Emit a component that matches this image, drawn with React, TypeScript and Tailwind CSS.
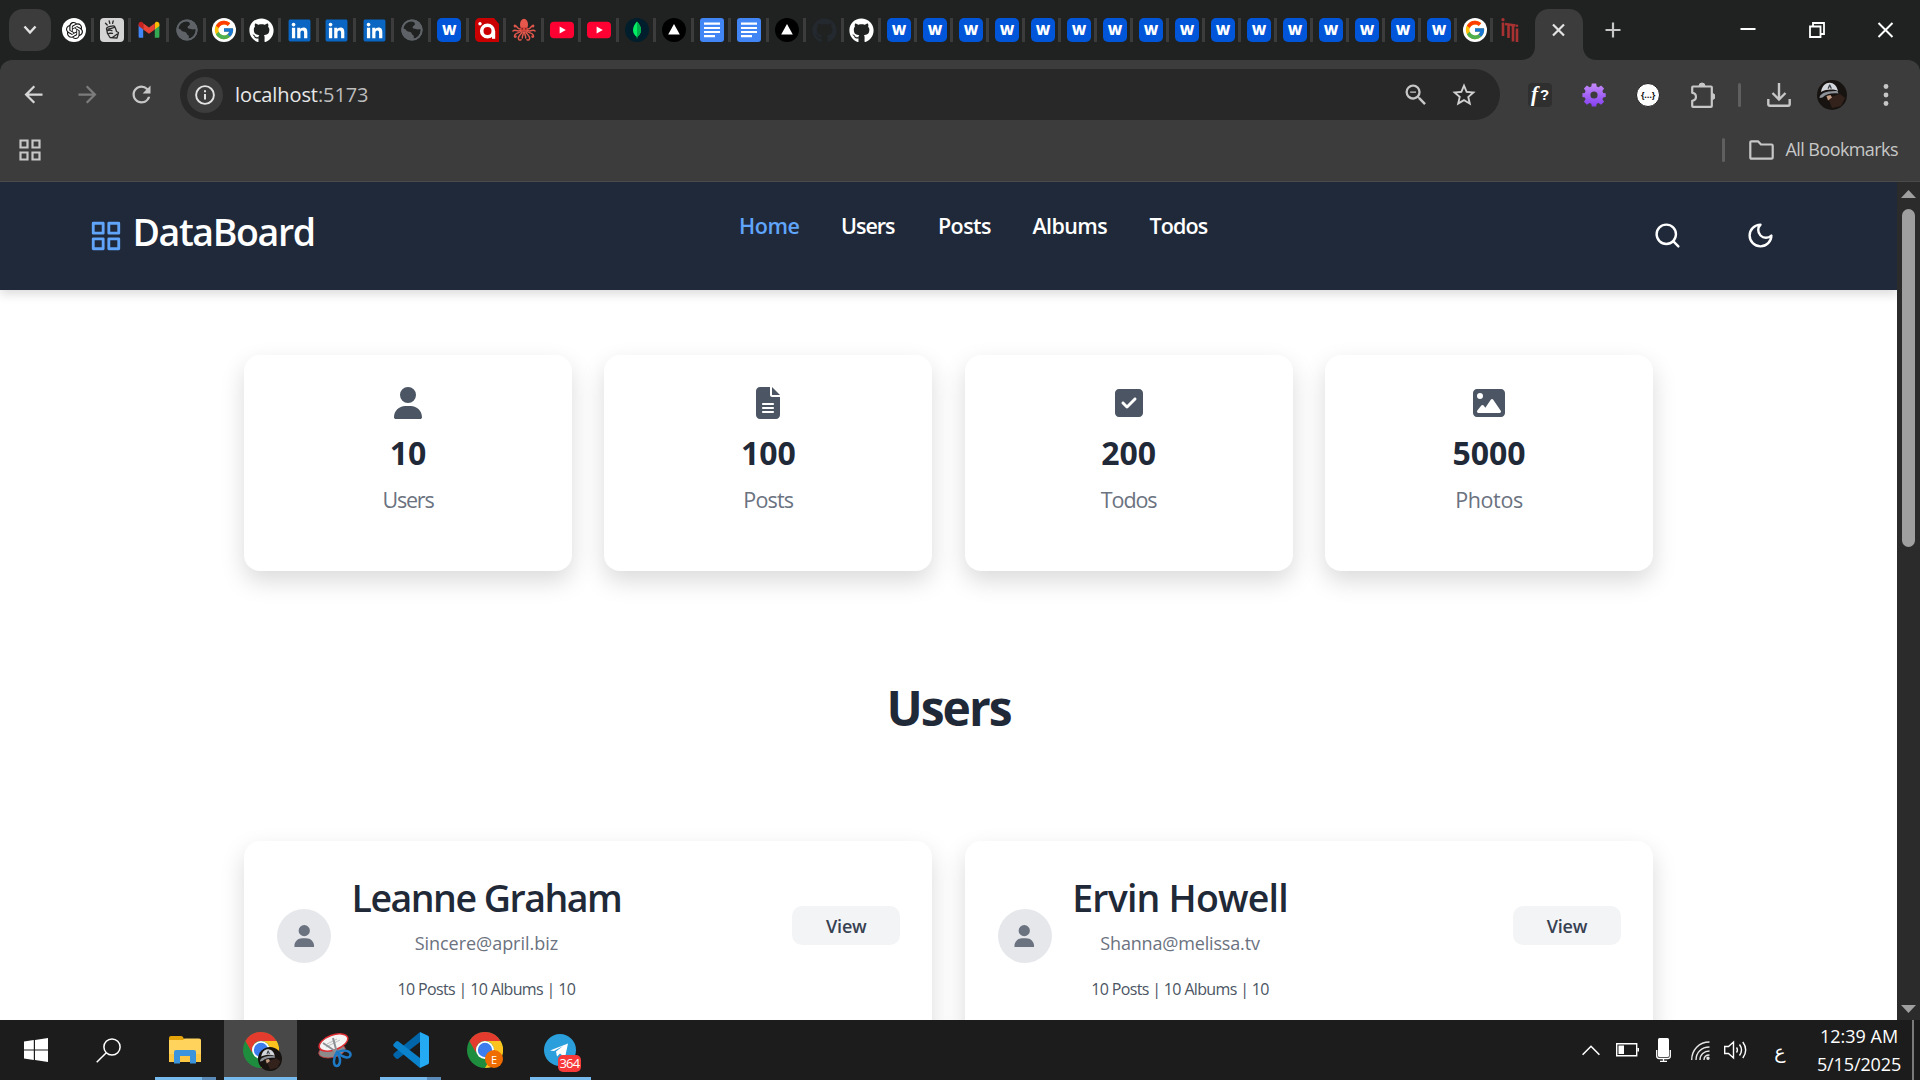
import React from "react";
import { FaUser, FaFileLines, FaSquareCheck, FaImage, FaGithub, FaLinkedin } from "react-icons/fa6";
import { FcGoogle } from "react-icons/fc";
import { SiOpenai } from "react-icons/si";
import { MdArrowBack, MdArrowForward, MdRefresh, MdZoomOut, MdStarBorder } from "react-icons/md";

/* ---------- favicons ---------- */

const ChatGpt = () => (
  <span className="flex size-6 items-center justify-center rounded-full bg-white">
    <SiOpenai size={17} color="#111" />
  </span>
);

const Hand = () => (
  <svg viewBox="0 0 24 24" className="size-6">
    <rect width="24" height="24" rx="4" fill="#d4d4d4" />
    <g fill="none" stroke="#2b2b2b" strokeWidth="1.300" strokeLinecap="round" strokeLinejoin="round">
      <path d="M5.500 5.200 7.200 7M9.200 3l.6 2.400M13.200 3l-.6 2.400" />
      <path d="M6.500 10.500c0-1.500 7-3.500 8-2.200 1 1.200-5 2.600-6.500 2.900M7 13c1.500-.8 4-1 5-.3M8 15.800c1.500-.8 3-.6 4.500-.4M14.500 8.300c1 2 1.500 3 2 5.200l2 1-1.500 5.500-7-.5-2.500-4-1-5M12 19.800l5-3.600" />
    </g>
  </svg>
);

const Gmail = () => (
  <svg viewBox="0 0 24 24" className="size-6">
    <path d="M1.600 6.500v12.300c0 .5.4 1 1 1h3.600V10z" fill="#4285f4" />
    <path d="M22.400 6.500v12.300c0 .5-.4 1-1 1h-3.600V10z" fill="#34a853" />
    <path d="M17.800 5.300v6.200l4.600-3.400V6c0-2-2.200-3-3.700-1.900z" fill="#fbbc04" />
    <path d="M6.200 11.500V5.300L12 9.600l5.800-4.300v6.200L12 15.800z" fill="#ea4335" />
    <path d="M1.600 6v2.100l4.600 3.400V5.300l-.9-1.200C3.800 3 1.600 4 1.600 6z" fill="#c5221f" />
  </svg>
);

const Globe = () => (
  <svg viewBox="0 0 24 24" className="size-6">
    <circle cx="12" cy="12" r="10.600" fill="#5f6368" />
    <path d="M8 3.600c4-1 7 .4 7 2.400 0 1.800-2.400 1.600-2.400 3.400 0 1.400 1.800.8 3.400 1.600 1.400.7 2.600.2 4.800.4-.2 5-3.200 8.400-7.200 9.200.3-2 .6-3-.8-3.600-1.200-.5-.8-2.200-2.200-2.800-1.400-.6-3.800-.3-4.600-2.200-.5-1.200-2-1.400-2.600-1.600C3.600 7.200 5.600 4.700 8 3.600z" fill="#1f2221" />
    <circle cx="12" cy="12" r="9.700" fill="none" stroke="#5f6368" strokeWidth="1.800" />
  </svg>
);

const Google = () => (
  <span className="flex size-6 items-center justify-center rounded-full bg-white">
    <FcGoogle size={22} />
  </span>
);

const Wuzzuf = () => (
  <span className="flex size-6 items-center justify-center rounded-[5px] bg-[#0055d9] text-[14px] font-extrabold leading-none text-white">
    W
  </span>
);

const RedA = () => (
  <svg viewBox="0 0 24 24" className="size-6">
    <path d="M5 0h14l5 6v18H5c-3 0-5-2-5-5V5c0-3 2-5 5-5z" fill="#cb0000" />
    <circle cx="12.500" cy="13" r="5.800" fill="none" stroke="#fff" strokeWidth="3.600" />
    <path d="M17 13h3.200v7.800H17z" fill="#fff" />
    <circle cx="5" cy="5.800" r="1.700" fill="#fff" />
  </svg>
);

const Octopus = () => (
  <svg viewBox="0 0 24 24" className="size-6">
    <ellipse cx="12" cy="6.500" rx="4" ry="5.800" fill="#e8574c" />
    <path d="M9 9h6l1 4.500H8z" fill="#d8453c" />
    <g fill="none" stroke="#e2574c" strokeWidth="1.500" strokeLinecap="round">
      <path d="M8.500 11C6 11.500 5.500 9 3.500 7.500 2.500 6.500 1.800 8 3 8.800M15.500 11c2.500.5 3-2 5-3.500 1-1 1.700.5.5 1.300" />
      <path d="M8.500 12.500C5 14 3 11 1 13M15.500 12.500c3.500 1.500 5.500-1.500 7.500.5" />
      <path d="M9 13.500c-3 2-6 1-6.500 4.500-.2 1.500 1.500 1.500 1.500.2M15 13.500c3 2 6 1 6.500 4.500.2 1.500-1.500 1.500-1.500.2" />
      <path d="M10 14c-1 3-4.500 3.500-3.500 7 .4 1.200 1.700 1.400 2.500.7M14 14c1 3 4.500 3.500 3.500 7-.4 1.200-1.700 1.400-2.500.7" />
      <path d="M11.300 14c.3 3-1.300 4-1 6M12.700 14c-.3 3 1.300 4 1 6" />
    </g>
    <path d="M10.200 10.200v1.200M13.800 10.200v1.200" stroke="#4a1410" strokeWidth="1.200" />
  </svg>
);

const YouTube = () => (
  <svg viewBox="0 0 24 24" className="size-6">
    <rect y="3.700" width="24" height="16.600" rx="4" fill="#ff0033" />
    <path d="M9.600 8.400v7.200l6.200-3.600z" fill="#fff" />
  </svg>
);

const Mongo = () => (
  <svg viewBox="0 0 24 24" className="size-6">
    <circle cx="12" cy="12" r="12" fill="#001e2b" />
    <path d="M12 3.500c2 2.300 4 4.800 4 8.500 0 3.300-1.600 5.300-3.600 6.800L12 21l-.4-2.200C9.600 17.300 8 15.300 8 12c0-3.700 2-6.200 4-8.500z" fill="#00ed64" />
    <path d="M12 3.500v17.500l.4-2.200c2-1.500 3.600-3.500 3.600-6.800 0-3.700-2-6.200-4-8.500z" fill="#00b04c" />
  </svg>
);

const Vercel = () => (
  <svg viewBox="0 0 24 24" className="size-6">
    <circle cx="12" cy="12" r="12" fill="#000" />
    <path d="M12 6l5.800 10.600H6.200z" fill="#fff" />
  </svg>
);

const Docs = () => (
  <svg viewBox="0 0 24 24" className="size-6">
    <rect width="24" height="24" rx="3" fill="#4285f4" />
    <path d="M4 5.700h16M4 10h16M4 14h16M4 18.200h11" stroke="#fff" strokeWidth="2.200" />
  </svg>
);

const Iti = () => (
  <svg viewBox="0 0 24 24" className="size-6">
    <g fill="none" stroke="#a83232" strokeWidth="2.600">
      <path d="M5 4.500V18M7 6l10.500 1.500M10.500 6v14M15 7v16.500M19 10.500V24" />
    </g>
    <circle cx="5" cy="1.700" r="1.600" fill="#a83232" />
    <circle cx="19" cy="7.800" r="1.300" fill="#a83232" />
  </svg>
);

const Linked = () => <FaLinkedin size={25} color="#0a66c2" className="rounded bg-[linear-gradient(#fff,#fff)] bg-[length:18px_18px] bg-center bg-no-repeat" />;
const GitLight = () => <FaGithub size={25} color="#fff" />;
const GitDark = () => <FaGithub size={25} color="#24292f" />;

const mixedTabs = [ChatGpt, Hand, Gmail, Globe, Google, GitLight, Linked, Linked, Linked, Globe, Wuzzuf, RedA, Octopus, YouTube, YouTube, Mongo, Vercel, Docs, Docs, Vercel, GitDark, GitLight];
const wTabs = Array.from({ length: 16 }, () => Wuzzuf);

function TabStrip() {
  return (
    <div className="flex h-[60px] items-center bg-[#1f2221]">
      <div className="ml-[9px] flex size-[42px] items-center justify-center rounded-[14px] bg-[#3c3c3c]">
        <svg width="14" height="10" viewBox="0 0 14 10" fill="none" stroke="#e3e3e3" strokeWidth="2.400">
          <path d="M1.500 1.500 7 7.500l5.500-6" />
        </svg>
      </div>
      <div className="ml-[5px] flex items-center">
        {mixedTabs.map((Icon, i) => (
          <div key={i} className="flex w-[37.5px] items-center">
            <div className="flex w-[34.5px] justify-center pl-[2px]"><Icon /></div>
            <div className="h-6 w-[3px] bg-[#3c3c3c]" />
          </div>
        ))}
        {[...wTabs, Google].map((Icon, i) => (
          <div key={i} className="flex w-9 items-center">
            <div className="flex w-[33px] justify-center pl-[3px]"><Icon /></div>
            <div className="h-6 w-[3px] bg-[#3c3c3c]" />
          </div>
        ))}
        <div className="flex w-[34px] justify-center"><Iti /></div>
      </div>
      <svg width="80" height="60" viewBox="0 0 80 60" className="-ml-[6px]">
        <path d="M0 60c9 0 14-6 14-14V23c0-8 6-14 14-14h20c8 0 14 6 14 14v23c0 8 5 14 14 14z" fill="#3c3c3c" />
        <path d="M32 24.500l11 11M43 24.500l-11 11" stroke="#e3e3e3" strokeWidth="2.200" />
      </svg>
      <svg width="16" height="16" viewBox="0 0 16 16" className="ml-[4px]">
        <path d="M8 .5v15M.5 8h15" stroke="#c7c7c7" strokeWidth="2.200" />
      </svg>
      <svg width="154" height="16" viewBox="0 0 154 16" className="ml-auto mr-[26px]" fill="none" stroke="#fff" strokeWidth="2">
        <path d="M.5 7h15" />
        <path d="M70 4.500h10.500v10.500H70zM73 4V1h11v11h-3" strokeWidth="1.800" />
        <path d="M138.500 1l14 14M152.500 1l-14 14" />
      </svg>
    </div>
  );
}

function Photo({ className }: { className: string }) {
  return (
    <svg viewBox="0 0 30 30" className={className}>
      <circle cx="15" cy="15" r="15" fill="#171310" />
      <path d="M11 18l12-4 5 4-4 8-9 2z" fill="#33221c" />
      <path d="M4 12C5 5 10 2 14 3c4 .5 6 4 7 8-5-2-11-2-17 1z" fill="#d3d6da" />
      <path d="M2.500 18c0-4 6-7.500 18-7l1 2.500c-7-.5-12 0-16 4z" fill="#8d9298" />
      <path d="M10.500 8.500l1.700-4h1l1.800 4-1.400.2-.9-2.200-.8 2.200z" fill="#3d4148" />
      <path d="M9.500 16l4-1 1.500 2.500-4 3z" fill="#c19a80" />
    </svg>
  );
}

function Toolbar() {
  return (
    <div className="bg-[#1f2221]">
      <div className="h-[121px] rounded-t-[12px] bg-[#3c3c3c]">
        <div className="flex h-[69px] items-center">
          <MdArrowBack size={27} color="#d6d6d6" className="ml-[19.5px]" />
          <MdArrowForward size={27} color="#7c7c7c" className="ml-[27px]" />
          <MdRefresh size={27} color="#c7c7c7" className="ml-[27px]" />
          <div className="ml-[25.5px] flex h-[51px] w-[1320px] items-center rounded-full bg-[#282828]">
            <div className="ml-[7px] flex size-9 items-center justify-center rounded-full bg-[#3c3c3c]">
              <svg width="20" height="20" viewBox="0 0 20 20">
                <circle cx="10" cy="10" r="8.900" fill="none" stroke="#e3e3e3" strokeWidth="1.900" />
                <path d="M10 9v5.500M10 5.300v2" stroke="#e3e3e3" strokeWidth="2" />
              </svg>
            </div>
            <span className="ml-[12px] text-[20px] leading-[28px] tracking-[-0.1px] text-[#e8e8e8]">
              localhost<span className="text-[#bdbdbd]">:5173</span>
            </span>
            <MdZoomOut size={28} color="#c7c7c7" className="ml-auto" />
            <MdStarBorder size={28} color="#d0d0d0" className="ml-[20px] mr-[22px]" />
          </div>
          <div className="ml-[28px] flex size-6 items-center justify-center rounded bg-[#2f2f2f] font-['Liberation_Serif'] text-[21px] font-bold italic leading-none text-white">
            <span>f</span><span className="ml-[2px] font-['Liberation_Sans'] text-[15px] not-italic">?</span>
          </div>
          <svg viewBox="0 0 24 24" className="ml-[30px] size-6">
            <defs>
              <linearGradient id="gear" x1="0" y1="0" x2="0" y2="1">
                <stop offset="0" stopColor="#c58af9" />
                <stop offset="1" stopColor="#8440f1" />
              </linearGradient>
            </defs>
            <path fill="url(#gear)" fillRule="evenodd" d="M9.800.5h4.400l.5 3 1.800.8 2.600-1.800 3 3-1.700 2.500.8 1.900 2.500.3v3.700l-2.500.5-.8 1.800 1.700 2.500-3 3-2.600-1.800-1.800.8-.5 2.900H9.800l-.5-2.900-1.800-.8-2.600 1.800-3-3 1.700-2.500-.8-1.800L.4 13.900v-3.700l2.400-.3.8-1.900L1.900 5.500l3-3 2.600 1.800 1.800-.8zM12 8.400a3.600 3.600 0 1 0 0 7.200 3.600 3.600 0 0 0 0-7.200z" />
          </svg>
          <div className="ml-[30px] flex size-6 items-center justify-center rounded-full border border-[#1f1f1f] bg-white text-[9px] font-bold leading-none tracking-[-0.3px] text-[#111]">
            {"{…}"}
          </div>
          <svg viewBox="0 0 26 26" className="ml-[29px] size-[26px]" fill="none" stroke="#c7c7c7" strokeWidth="2.200" strokeLinejoin="round">
            <path d="M4 4.500h18q.8 0 .8.800V24q0 .8-.8.800H4q-.8 0-.8-.8v-5.200c5-.5 5-7.500 0-8V5.300q0-.8.8-.8z" />
            <path d="M10 4a3 3 0 0 1 6 0zM23 11.500a3 3 0 0 1 0 6z" fill="#c7c7c7" strokeWidth="1" />
          </svg>
          <div className="ml-[23px] h-6 w-[3px] rounded bg-[#5f5f5f]" />
          <svg viewBox="0 0 24 24" className="ml-[26px] size-6" fill="none" stroke="#c7c7c7" strokeWidth="2.400">
            <path d="M12 0v16M5.500 10l6.500 6.500 6.500-6.500M1.300 16v5q0 1.700 1.700 1.700h18q1.700 0 1.700-1.700v-5" />
          </svg>
          <Photo className="ml-[26px] size-[30px]" />
          <svg width="6" height="22" viewBox="0 0 6 22" className="ml-[36px]" fill="#c7c7c7">
            <circle cx="3" cy="2.500" r="2.400" />
            <circle cx="3" cy="11" r="2.400" />
            <circle cx="3" cy="19.500" r="2.400" />
          </svg>
        </div>
        <div className="flex h-[42px] items-center">
          <svg width="22" height="22" viewBox="0 0 22 22" className="ml-[19px]" fill="none" stroke="#c7c7c7" strokeWidth="2.200">
            <path d="M1.500 1.500h7v7h-7zM13.500 1.500h7v7h-7zM1.500 13.500h7v7h-7zM13.500 13.500h7v7h-7z" />
          </svg>
          <div className="ml-auto h-6 w-[3px] rounded bg-[#5f5f5f]" />
          <svg width="25" height="20" viewBox="0 0 25 20" className="ml-[24px]" fill="none" stroke="#c7c7c7" strokeWidth="2.200" strokeLinejoin="round">
            <path d="M2.500 1.300h6.500l3 3.200h10.500q1.200 0 1.200 1.200v11.800q0 1.200-1.200 1.200h-20q-1.200 0-1.200-1.200v-15q0-1.200 1.200-1.200z" />
          </svg>
          <span className="mb-[2px] ml-[11px] mr-[22px] text-[18px] leading-[26px] tracking-[-0.57px] text-[#c7c7c7]">All Bookmarks</span>
        </div>
      </div>
      <div className="h-px bg-[#4a4a4a]" />
    </div>
  );
}

/* ---------- page ---------- */

const links = [
  { label: "Home", box: "w-[102px] tracking-[-0.4px] text-[#60a5fa]" },
  { label: "Users", box: "w-[97px] tracking-[-1px]" },
  { label: "Posts", box: "w-[94.5px] tracking-[-0.6px]" },
  { label: "Albums", box: "w-[117px] tracking-[-0.6px]" },
  { label: "Todos", box: "w-[60px] tracking-[-0.9px]" },
];

function Navbar() {
  return (
    <nav className="relative z-10 flex h-[108px] shrink-0 items-start bg-[#1f293a] text-white shadow-[0_4px_10px_rgba(0,0,0,0.15)]">
      <div className="flex w-[739px] pl-[89px] pt-[26px]">
        <svg viewBox="0 0 24 24" className="mt-[11px] size-[34px]" fill="none" stroke="#60a5fa" strokeWidth="2" strokeLinejoin="round">
          <path d="M3 3h7v7H3zM14 3h7v7h-7zM14 14h7v7h-7zM3 14h7v7H3z" />
        </svg>
        <span className="ml-[9.5px] text-[37.5px] font-semibold leading-[48px] tracking-[-1.4px]">DataBoard</span>
      </div>
      <div className="flex pt-[29px] text-[21.5px] font-semibold leading-[30px]">
        {links.map((l) => (
          <a key={l.label} className={l.box}>{l.label}</a>
        ))}
      </div>
      <div className="ml-auto flex gap-[64px] pr-[122px] pt-[39px]">
        <svg viewBox="0 0 24 24" className="size-[29px]" fill="none" stroke="#fff" strokeWidth="2" strokeLinecap="round">
          <circle cx="11" cy="11" r="8" />
          <path d="m21 21-4.300-4.300" />
        </svg>
        <svg viewBox="0 0 24 24" className="size-[29px]" fill="none" stroke="#fff" strokeWidth="2" strokeLinecap="round" strokeLinejoin="round">
          <path d="M12 3a6 6 0 0 0 9 9 9 9 0 1 1-9-9Z" />
        </svg>
      </div>
    </nav>
  );
}

const stats = [
  { Icon: FaUser, value: "10", label: "Users", fit: "tracking-[-1.2px]" },
  { Icon: FaFileLines, value: "100", label: "Posts", fit: "tracking-[-0.8px]" },
  { Icon: FaSquareCheck, value: "200", label: "Todos", fit: "tracking-[-1.1px]" },
  { Icon: FaImage, value: "5000", label: "Photos", fit: "tracking-[-0.4px]" },
];

const users = [
  { name: "Leanne Graham", email: "Sincere@april.biz", nameFit: "tracking-[-1.5px]", emailFit: "tracking-[-0.03px]" },
  { name: "Ervin Howell", email: "Shanna@melissa.tv", nameFit: "tracking-[-0.8px]", emailFit: "tracking-[-0.17px]" },
];

function Page() {
  return (
    <div className="flex flex-1 flex-col overflow-hidden bg-white">
      <Navbar />
      <main className="mx-[244px] pt-[65px]">
        <div className="grid grid-cols-4 gap-[32.4px]">
          {stats.map(({ Icon, value, label, fit }) => (
            <div key={label} className="flex h-[216px] flex-col items-center rounded-[16px] bg-white pt-8 shadow-[0_10px_24px_rgba(0,0,0,0.15)]">
              <Icon size={32} color="#4b5563" />
              <div className="mt-[14px] text-[32px] font-bold leading-[40px] text-[#1f2937]">{value}</div>
              <div className={`mt-[12px] text-[21.5px] leading-[30px] text-[#6b7280] ${fit}`}>{label}</div>
            </div>
          ))}
        </div>
        <h2 className="mt-[107px] text-center text-[48px] font-bold leading-[60px] tracking-[-2px] text-[#1f2937]">Users</h2>
        <div className="mt-[103px] grid grid-cols-2 gap-[32.4px]">
          {users.map((u) => (
            <div key={u.name} className="flex h-[240px] items-start rounded-[16px] bg-white px-8 pt-8 shadow-[0_10px_24px_rgba(0,0,0,0.15)]">
              <div className="ml-[1px] mt-[36px] flex size-[54px] items-center justify-center rounded-full bg-[#e5e7eb]">
                <FaUser size={22.5} color="#6b7280" />
              </div>
              <div className="ml-[20.5px] flex flex-col items-center">
                <div className={`text-[37.5px] font-semibold leading-[49px] text-[#1f2937] ${u.nameFit}`}>{u.name}</div>
                <div className={`mt-[7px] text-[18px] leading-[28px] text-[#6b7280] ${u.emailFit}`}>{u.email}</div>
                <div className="mt-[20px] text-[16px] leading-[24px] tracking-[-0.65px] text-[#4b5563]">10 Posts | 10 Albums | 10</div>
              </div>
              <div className="ml-auto mt-[33px] flex h-[39px] w-[108px] items-center justify-center rounded-[10px] bg-[#f3f4f6] pt-[2px] text-[18px] font-semibold tracking-[-0.2px] text-[#374151]">
                View
              </div>
            </div>
          ))}
        </div>
      </main>
    </div>
  );
}

function Scrollbar() {
  return (
    <div className="flex w-[23px] flex-col items-center bg-[#2b2b2b]">
      <svg width="15" height="8" viewBox="0 0 15 8" className="mt-[8px]"><path d="M7.500 0 15 8H0z" fill="#9f9f9f" /></svg>
      <div className="mt-[11px] h-[338px] w-[13px] rounded-full bg-[#9f9f9f]" />
      <svg width="15" height="8" viewBox="0 0 15 8" className="mb-[7px] mt-auto"><path d="M0 0h15L7.500 8z" fill="#9f9f9f" /></svg>
    </div>
  );
}

/* ---------- taskbar ---------- */

function ChromeIcon() {
  return (
    <svg viewBox="0 0 36 36" className="size-9">
      <circle cx="18" cy="18" r="18" fill="#1e8e3e" />
      <path d="M33.600 9a18 18 0 0 1-15.600 27l7.800-13.500A9 9 0 0 0 18 9z" fill="#fcc31e" />
      <path d="M2.400 9A18 18 0 0 1 33.600 9H18a9 9 0 0 0-8.600 6.500l-.4 4.900z" fill="#e33b2e" />
      <circle cx="18" cy="18" r="9" fill="#fff" />
      <circle cx="18" cy="18" r="7.200" fill="#3b7ded" />
    </svg>
  );
}

function Taskbar() {
  return (
    <div className="flex h-[60px] bg-[#1c1c1c] text-white">
      <div className="flex w-[72px] items-center justify-center">
        <svg width="24" height="24" viewBox="0 0 24 24" fill="#fff">
          <path d="M0 3.400l9.800-1.300v9.300H0zM11 1.900L24 0v11.400H11zM0 12.600h9.800v9.300L0 20.600zM11 12.600h13V24l-13-1.900z" />
        </svg>
      </div>
      <div className="flex w-[72px] items-center justify-center">
        <svg width="25" height="25" viewBox="0 0 25 25" fill="none" stroke="#fff" strokeWidth="1.500">
          <circle cx="16" cy="9" r="8.100" />
          <path d="M10.300 14.700.7 24.300" />
        </svg>
      </div>
      <div className="flex w-[80px] flex-col items-center pl-[2px]">
        <svg width="32" height="28" viewBox="0 0 32 28" className="mt-[16px]">
          <path d="M0 2q0-2 2-2h10q2 0 2.500 2l.5 1h15q2 0 2 2v5H0z" fill="#e5a50a" />
          <path d="M0 4h14l1.500-1.500H30q2 0 2 2V26H0z" fill="#ffd35c" />
          <path d="M0 18h32v6q0 2-2 2H2q-2 0-2-2z" fill="#fcc743" />
          <path d="M5 16q0-2 2-2h18q2 0 2 2v11.500h-6V20H11v7.500H5z" fill="#3c94dc" />
        </svg>
        <div className="mt-auto flex h-[3px] w-[61px] bg-[#5a8ab8]"><div className="w-[47px] bg-[#76b9ed]" /></div>
      </div>
      <div className="flex w-[73px] flex-col items-center bg-[#484848]">
        <div className="relative mt-[12px]">
          <ChromeIcon />
          <div className="absolute left-[15px] top-[15px]"><Photo className="size-6" /></div>
        </div>
        <div className="mt-auto h-[3px] w-full bg-[#76b9ed]" />
      </div>
      <div className="flex w-[76px] flex-col items-center">
        <svg width="34" height="35" viewBox="0 0 34 35" className="mt-[13px]">
          <ellipse cx="14" cy="18" rx="13.500" ry="6.500" fill="#8b8b8b" stroke="#c0393b" strokeWidth=".8" transform="rotate(-12 14 18)" />
          <ellipse cx="15.500" cy="9.500" rx="15" ry="7.500" fill="#f4f4f4" stroke="#dd2e34" strokeWidth="1.500" transform="rotate(-20 15.500 9.500)" />
          <path d="M8 14l14-7M9 11l10-5" stroke="#bdbdbd" strokeWidth="1" />
          <path d="M15 5l4 15M5 10l15 10" stroke="#8d9196" strokeWidth="2" />
          <g fill="none" stroke="#1e7ac4" strokeWidth="2.500">
            <path d="M19 19c-4 6-4 14-.5 14s5.500-6 .5-14z" />
            <path d="M20 19c6-3 13-1 12.500 3S24 25 20 19z" />
          </g>
        </svg>
      </div>
      <div className="flex w-[75px] flex-col items-center">
        <svg width="36" height="36" viewBox="0 0 36 36" className="mt-[12px]">
          <path d="M27 0v10L5.500 26.500q-1.500 1-3-.5L.7 24q-1-1.500.4-2.800z" fill="#0065a9" />
          <path d="M27 36V26L5.500 9.500q-1.500-1-3 .5L.7 12q-1 1.500.4 2.800z" fill="#0a83cc" />
          <path d="M27 0l8 3.800q1 .5 1 1.700v25q0 1.200-1 1.700L27 36z" fill="#24aaf2" />
        </svg>
        <div className="mt-auto flex h-[3px] w-[61px] bg-[#5a8ab8]"><div className="w-[47px] bg-[#76b9ed]" /></div>
      </div>
      <div className="flex w-[74px] flex-col items-center">
        <div className="relative mt-[12px]">
          <ChromeIcon />
          <div className="absolute left-[18px] top-[18px] flex size-[18px] items-center justify-center rounded-full bg-[#ef6c00] text-[11px] leading-none">E</div>
        </div>
      </div>
      <div className="flex w-[76px] flex-col items-center">
        <div className="relative mt-[14px]">
          <svg width="32" height="32" viewBox="0 0 32 32">
            <circle cx="16" cy="16" r="16" fill="#2a9fdb" />
            <path d="M6 16.500L24 9.500l-3 14-5-4-3 3-1-5 7-5.500-9 5z" fill="#fff" />
          </svg>
          <div className="absolute left-[14px] top-[21px] flex h-[17px] w-[23px] items-center justify-center rounded-[5px] bg-[#f7393a] text-[13px] leading-none tracking-[-0.7px]">364</div>
        </div>
        <div className="mt-auto h-[3px] w-[61px] bg-[#76b9ed]" />
      </div>

      <div className="ml-auto flex items-center">
        <div className="flex w-9 justify-center">
          <svg width="18" height="11" viewBox="0 0 18 11" fill="none" stroke="#fff" strokeWidth="1.600"><path d="M.6 9.800 9 1.300l8.400 8.500" /></svg>
        </div>
        <div className="flex w-[37px] justify-center">
          <svg width="23" height="14" viewBox="0 0 23 14"><path d="M.7.700h20v12H.7z" fill="none" stroke="#fff" strokeWidth="1.400" /><path d="M2.500 2.500H8v8.500H2.500zM21.400 5H23v3.500h-1.600z" fill="#fff" /></svg>
        </div>
        <div className="flex w-[34px] justify-center">
          <svg width="15" height="24" viewBox="0 0 15 24"><rect x="2" width="11" height="19" rx="1.500" fill="#fff" /><path d="M.7 12v6q0 2.500 2.500 2.500h8.600q2.500 0 2.500-2.500v-6M7.500 20.500V23M4 23.300h7" fill="none" stroke="#fff" strokeWidth="1.300" /></svg>
        </div>
        <div className="flex w-10 justify-center">
          <svg width="19" height="19" viewBox="0 0 19 19" fill="none" stroke="#e6e6e6" strokeWidth="1.400">
            <path d="M.7 19C.7 9 8 1 18.500 1M5 19c0-7.500 5.500-13 13.500-13M9 19c0-5.500 4-9 9.500-9M13 19c0-3 2-5 5.500-5" />
            <circle cx="17" cy="17.200" r="1" fill="#fff" />
          </svg>
        </div>
        <div className="flex w-[31px] justify-center">
          <svg width="23" height="20" viewBox="0 0 23 20" fill="none" stroke="#fff" strokeWidth="1.400"><path d="M.7 6.500h3.800L9.500 2v16l-5-4.500H.7zM12.500 7.500q1.800 2.500 0 5M15.500 4.500q4 5.500 0 11M18.800 2q5.800 8 0 16" /></svg>
        </div>
        <div className="flex w-[58px] justify-center pt-[2px] font-['DejaVu_Sans'] text-[19px] leading-none">ع</div>
        <div className="flex w-[100px] flex-col items-center text-[18px] leading-[28px]">
          <span>12:39 AM</span>
          <span className="tracking-[-0.12px]">5/15/2025</span>
        </div>
        <div className="ml-[3px] mr-[6px] h-full w-[2px] bg-[#7a7a7a]" />
      </div>
    </div>
  );
}

export default function App() {
  return (
    <div className="flex h-[1080px] w-[1920px] flex-col overflow-hidden font-['Open_Sans','Noto_Sans',sans-serif]">
      <TabStrip />
      <Toolbar />
      <div className="flex h-[838px]">
        <Page />
        <Scrollbar />
      </div>
      <Taskbar />
    </div>
  );
}
